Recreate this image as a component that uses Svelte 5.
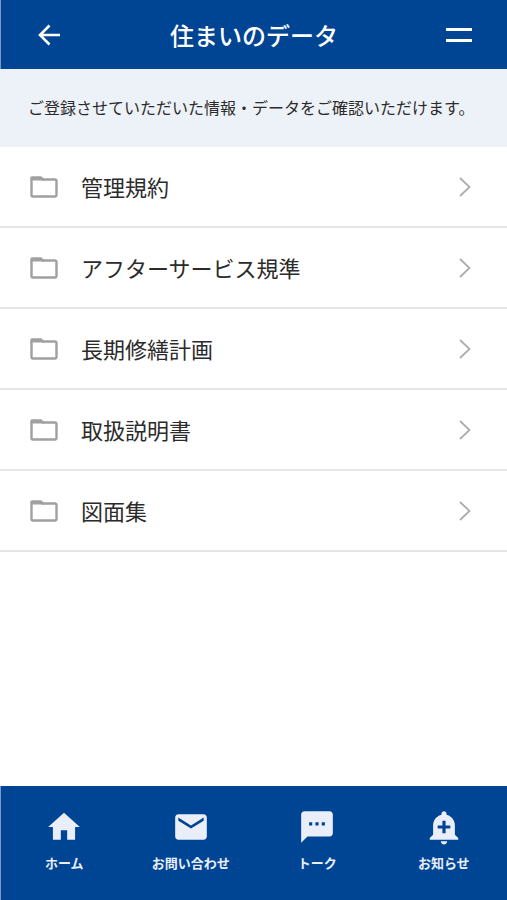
<script lang="ts">
  type Tab = { label: string; href: string; path: string };

  const documents = [
    '管理規約',
    'アフターサービス規準',
    '長期修繕計画',
    '取扱説明書',
    '図面集'
  ];

  const tabs: Tab[] = [
    { label: 'ホーム', href: '#home', path: 'M10 20v-6h4v6h5v-8h3L12 3 2 12h3v8z' },
    {
      label: 'お問い合わせ',
      href: '#contact',
      path: 'M20 4H4c-1.1 0-2 .9-2 2v12c0 1.1.9 2 2 2h16c1.1 0 2-.9 2-2V6c0-1.1-.9-2-2-2zm0 4l-8 5-8-5V6l8 5 8-5v2z'
    },
    {
      label: 'トーク',
      href: '#talk',
      path: 'M20 2H4c-1.1 0-2 .9-2 2v18l4-4h14c1.1 0 2-.9 2-2V4c0-1.1-.9-2-2-2zM9 11H7V9h2v2zm4 0h-2V9h2v2zm4 0h-2V9h2v2z'
    },
    {
      label: 'お知らせ',
      href: '#news',
      path: 'M10.01 21.01c0 1.1.89 1.99 1.99 1.99s1.99-.89 1.99-1.99h-3.98zm8.87-4.19V11c0-3.25-2.25-5.97-5.29-6.69v-.72C13.59 2.71 12.88 2 12 2s-1.59.71-1.59 1.59v.72C7.37 5.03 5.12 7.75 5.12 11v5.82L3 18.94V20h18v-1.06l-2.12-2.12zM16 13.01h-3v3h-2v-3H8V11h3V8h2v3h3v2.01z'
    }
  ];
</script>

<div class="screen">
  <header class="header">
    <button class="icon-btn" aria-label="戻る">
      <svg width="24" height="24" viewBox="0 0 24 24" fill="none" stroke="currentColor" stroke-width="2.6">
        <path d="M23 12H3M12.500 2.500L3 12l9.500 9.500"/>
      </svg>
    </button>
    <h1 class="title">住まいのデータ</h1>
    <button class="icon-btn" aria-label="メニュー">
      <svg width="26" height="24" viewBox="0 0 26 24" fill="currentColor">
        <rect x="0" y="5" width="26" height="3"/>
        <rect x="0" y="16" width="26" height="3"/>
      </svg>
    </button>
  </header>

  <p class="lead">ご登録させていただいた情報・データをご確認いただけます。</p>

  <main class="content">
    <ul class="list">
      {#each documents as name}
        <li>
          <a class="row" href="#{name}">
            <svg class="folder" width="28" height="22" viewBox="0 0 28 22">
              <path d="M1.500 3.500v15.500a1.500 1.500 0 0 0 1.500 1.500h22a1.500 1.500 0 0 0 1.500-1.500V5a1.500 1.500 0 0 0-1.500-1.500H12" fill="none" stroke="currentColor" stroke-width="2.4"/>
              <path d="M.3 5V2A1.800 1.800 0 0 1 2 .2h8.500c1.500 0 2.500 1.500 3.500 2.500V4.500H.3z" fill="currentColor"/>
            </svg>
            <span class="name">{name}</span>
            <svg class="chevron" width="12" height="20" viewBox="0 0 12 20" fill="none" stroke="currentColor" stroke-width="1.800">
              <path d="M1 1l9.500 9L1 19"/>
            </svg>
          </a>
        </li>
      {/each}
    </ul>
  </main>

  <nav class="tabs">
    {#each tabs as tab}
      <a class="tab" href={tab.href}>
        <svg width="38" height="38" viewBox="0 0 24 24" fill="currentColor">
          <path d={tab.path}/>
        </svg>
        <span>{tab.label}</span>
      </a>
    {/each}
  </nav>
</div>

<style>
  :global(body) {
    margin: 0;
    background: #fff;
  }

  .screen {
    display: flex;
    flex-direction: column;
    min-height: 100vh;
    font-family: 'Noto Sans CJK JP', sans-serif;
    color: #2b2b2b;
  }

  .header {
    display: flex;
    align-items: center;
    justify-content: space-between;
    height: 69px;
    padding: 1px 28px 0;
    background: #004494;
    color: #fff;
    border-left: 1px solid #8095c8;
    box-sizing: border-box;
  }

  .icon-btn {
    display: flex;
    align-items: center;
    justify-content: center;
    width: 40px;
    height: 40px;
    padding: 0;
    border: 0;
    background: none;
    color: inherit;
    cursor: pointer;
  }

  .title {
    margin: 0;
    font-size: 24px;
    font-weight: 500;
    line-height: 32px;
  }

  .lead {
    margin: 0;
    padding: 26px 0 28px 28px;
    background: #edf2f8;
    font-size: 16px;
    line-height: 24px;
  }

  .content {
    flex: 1;
  }

  .list {
    margin: 0;
    padding: 0;
    list-style: none;
  }

  .row {
    display: flex;
    align-items: center;
    height: 79px;
    padding: 0 36px 0 30px;
    border-bottom: 2px solid #e6e6e6;
    color: inherit;
    text-decoration: none;
  }

  .folder {
    color: #a0a0a0;
  }

  .name {
    flex: 1;
    margin-left: 23px;
    padding-bottom: 2px;
    font-size: 22px;
    line-height: 32px;
  }

  .chevron {
    color: #adadad;
  }

  .tabs {
    display: grid;
    grid-template-columns: repeat(4, 1fr);
    height: 114px;
    background: #004494;
    border-left: 1px solid #8095c8;
    box-sizing: border-box;
  }

  .tab {
    display: flex;
    flex-direction: column;
    align-items: center;
    gap: 7px;
    padding-top: 22px;
    color: #e9eef8;
    font-size: 13px;
    font-weight: 700;
    line-height: 20px;
    text-decoration: none;
  }
</style>
